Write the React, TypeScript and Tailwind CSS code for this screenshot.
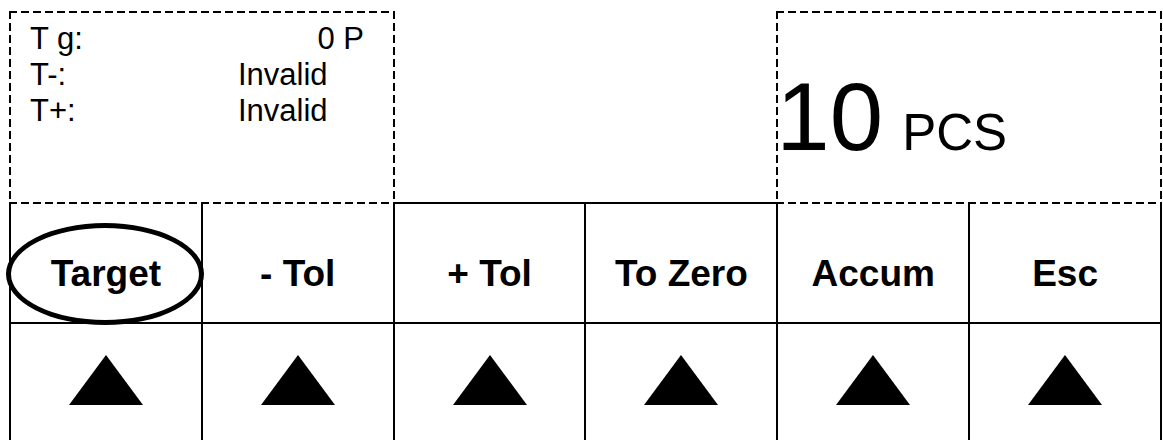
import React from "react";

const labels = ["Target", "- Tol", "+ Tol", "To Zero", "Accum", "Esc"];

const dashed =
  "bg-no-repeat [background-image:repeating-linear-gradient(90deg,#000_0_8px,transparent_8px_12px),repeating-linear-gradient(90deg,#000_0_8px,transparent_8px_12px),repeating-linear-gradient(180deg,#000_0_8px,transparent_8px_12px),repeating-linear-gradient(180deg,#000_0_8px,transparent_8px_12px)] [background-size:100%_2px,100%_2px,2px_100%,2px_100%] [background-position:0_0,0_100%,0_0,100%_0]";

export default function App() {
  return (
    <div className="w-[1163px] h-[440px] overflow-hidden bg-white text-black font-['Liberation_Sans',Arial,sans-serif]">
      <div className="ml-[9px] pt-[11px] w-[1153px]">
        <div className="grid grid-cols-[385.67px_1fr_385.67px] h-[193px]">
          <div className={`${dashed} pl-[21px] pt-[10px]`}>
            <div className="grid grid-cols-[208px_126px] text-[31px] leading-[36px] whitespace-nowrap">
              <span>T g:</span>
              <span className="text-right">0 P</span>
              <span>T-:</span>
              <span>Invalid</span>
              <span>T+:</span>
              <span>Invalid</span>
            </div>
          </div>
          <div className="border-b-2 border-black" />
          <div className={dashed}>
            <div className="pt-[58px] leading-none whitespace-nowrap">
              <span className="text-[96px]">10</span>
              <span className="ml-[19px] text-[51px]">PCS</span>
            </div>
          </div>
        </div>
        <div className="grid grid-cols-6 border-l-2 border-black">
          {labels.map((l, i) => (
            <div
              key={l}
              className="relative h-[120px] border-r-2 border-b-2 border-black flex justify-center pt-[51px]"
            >
              <span className="text-[37px] font-bold leading-none whitespace-nowrap">{l}</span>
              {i === 0 && (
                <div className="absolute left-[-5px] top-[19px] w-[198px] h-[102px] rounded-[50%] border-[5px] border-black z-10" />
              )}
            </div>
          ))}
          {labels.map((l) => (
            <div
              key={l + "-arrow"}
              className="h-[120px] border-r-2 border-b-2 border-black flex items-center justify-center pb-[6px]"
            >
              <svg width="74" height="50" viewBox="0 0 74 50">
                <polygon points="37,0 74,50 0,50" fill="#000" />
              </svg>
            </div>
          ))}
        </div>
      </div>
    </div>
  );
}
